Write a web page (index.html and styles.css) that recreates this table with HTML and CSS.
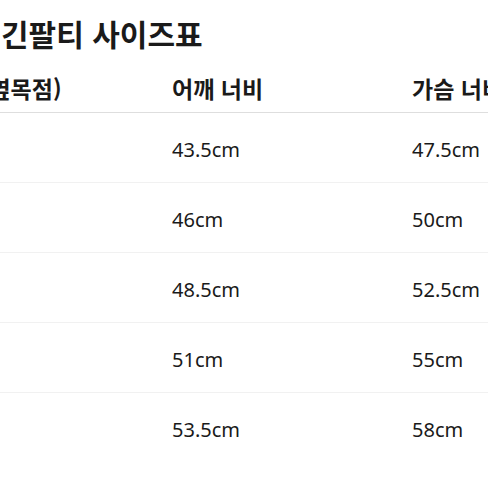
FILE: index.html
```html
<!DOCTYPE html>
<html lang="ko">
<head>
<meta charset="utf-8">
<link rel="stylesheet" href="styles.css">
</head>
<body>
<div class="page">
  <h1 class="title">긴팔티 사이즈표</h1>
  <div class="scroller">
    <div class="table">
      <div class="row head">
        <div class="cell">총장 (옆목점)</div>
        <div class="cell">어깨 너비</div>
        <div class="cell">가슴 너비</div>
        <div class="cell">소매 길이</div>
      </div>
      <div class="row">
        <div class="cell">S</div><div class="cell">43.5cm</div><div class="cell">47.5cm</div><div class="cell">60cm</div>
      </div>
      <div class="row">
        <div class="cell">M</div><div class="cell">46cm</div><div class="cell">50cm</div><div class="cell">61cm</div>
      </div>
      <div class="row">
        <div class="cell">L</div><div class="cell">48.5cm</div><div class="cell">52.5cm</div><div class="cell">62cm</div>
      </div>
      <div class="row">
        <div class="cell">XL</div><div class="cell">51cm</div><div class="cell">55cm</div><div class="cell">63cm</div>
      </div>
      <div class="row last">
        <div class="cell">2XL</div><div class="cell">53.5cm</div><div class="cell">58cm</div><div class="cell">64cm</div>
      </div>
    </div>
  </div>
</div>
</body>
</html>
```

FILE: styles.css
```css
html, body {
  margin: 0;
  padding: 0;
  background: #ffffff;
}
body {
  width: 488px;
  height: 488px;
  overflow: hidden;
  color: #1a1a1a;
  font-family: "Noto Sans", "Noto Sans CJK KR", sans-serif;
}
.page {
  width: 488px;
}
.title {
  margin: 15px 0 5px 1px;
  font-family: "Noto Sans CJK KR", sans-serif;
  font-size: 30px;
  line-height: 36px;
  font-weight: 700;
  white-space: nowrap;
}
.scroller {
  width: 488px;
  overflow: hidden;
}
.table {
  margin-left: -68px;
  width: 960px;
}
.row {
  display: grid;
  grid-template-columns: 240px 240px 240px 240px;
  padding: 22px 0 17px;
  border-bottom: 1px solid #f1f1f1;
  font-size: 20px;
  line-height: 30px;
  white-space: nowrap;
}
.row.head {
  padding: 17px 0 9px;
  border-bottom: 1px solid #dedede;
  font-family: "Noto Sans CJK KR", sans-serif;
  font-size: 23px;
  font-weight: 700;
}
.row.last {
  border-bottom-color: transparent;
}
.cell {
  overflow: hidden;
}
```
